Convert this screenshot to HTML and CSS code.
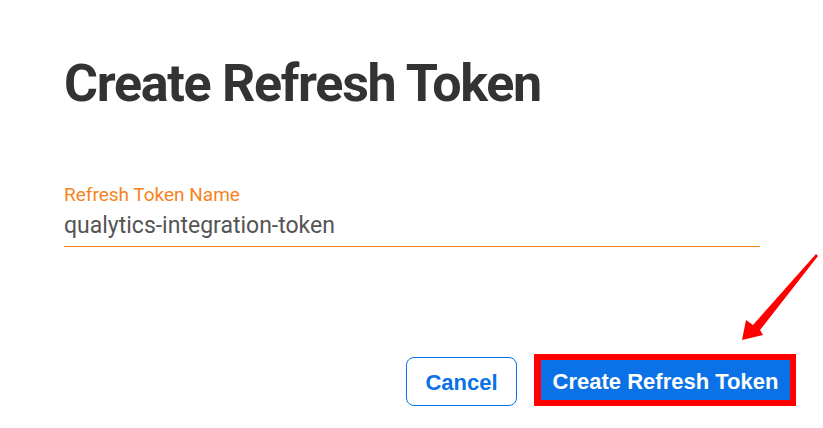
FILE: index.html
```html
<!DOCTYPE html>
<html>
<head>
<meta charset="utf-8">
<link rel="stylesheet" href="styles.css">
</head>
<body>
<div class="page">
  <h1 class="title">Create Refresh Token</h1>
  <div class="field">
    <label class="field-label">Refresh Token Name</label>
    <div class="field-input">qualytics-integration-token</div>
  </div>
  <div class="actions">
    <button class="btn btn-cancel">Cancel</button>
    <div class="highlight">
      <button class="btn btn-primary">Create Refresh Token</button>
    </div>
  </div>
</div>
<svg class="arrow" width="823" height="428" viewBox="0 0 823 428">
  <polygon points="818,256 760,330 763,335 742,340 746,320 753,325 816,254" fill="#ff0000"/>
</svg>
</body>
</html>
```
FILE: styles.css
```css
html, body {
  margin: 0;
  padding: 0;
  background: #ffffff;
}
.page {
  width: 823px;
  height: 428px;
  box-sizing: border-box;
  padding: 0 27px 0 64px;
  display: flex;
  flex-direction: column;
}
.title {
  margin: 53px 0 0 0;
  font-family: "Roboto", "Liberation Sans", sans-serif;
  font-weight: 700;
  font-size: 52px;
  line-height: 62px;
  letter-spacing: -1.3px;
  color: #333333;
}
.field {
  margin-top: 69px;
  width: 696px;
  display: flex;
  flex-direction: column;
}
.field-label {
  font-family: "Roboto", "Liberation Sans", sans-serif;
  font-size: 19px;
  line-height: 22px;
  color: #f5841f;
}
.field-input {
  margin-top: 6px;
  font-family: "Roboto", "Liberation Sans", sans-serif;
  font-size: 23px;
  line-height: 28px;
  color: #555555;
  padding-bottom: 6px;
  border-bottom: 1px solid #f5841f;
}
.actions {
  margin-top: 107px;
  display: flex;
  justify-content: flex-end;
  align-items: flex-end;
  gap: 17px;
}
.btn {
  font-family: "Liberation Sans", sans-serif;
  font-weight: 700;
  font-size: 22px;
  cursor: pointer;
}
.btn-cancel {
  width: 111px;
  height: 49px;
  border: 1px solid #0a72e6;
  border-radius: 8px;
  background: #ffffff;
  color: #0a72e6;
  padding: 2px 0 0 0;
}
.highlight {
  border: 6px solid #ff0000;
  border-left-width: 7px;
  display: flex;
}
.btn-primary {
  width: 249px;
  height: 40px;
  border: none;
  border-radius: 0;
  background: #0a72e6;
  color: #ffffff;
  padding: 4px 0 0 0;
}
.arrow {
  position: absolute;
  left: 0;
  top: 0;
  pointer-events: none;
}
```
